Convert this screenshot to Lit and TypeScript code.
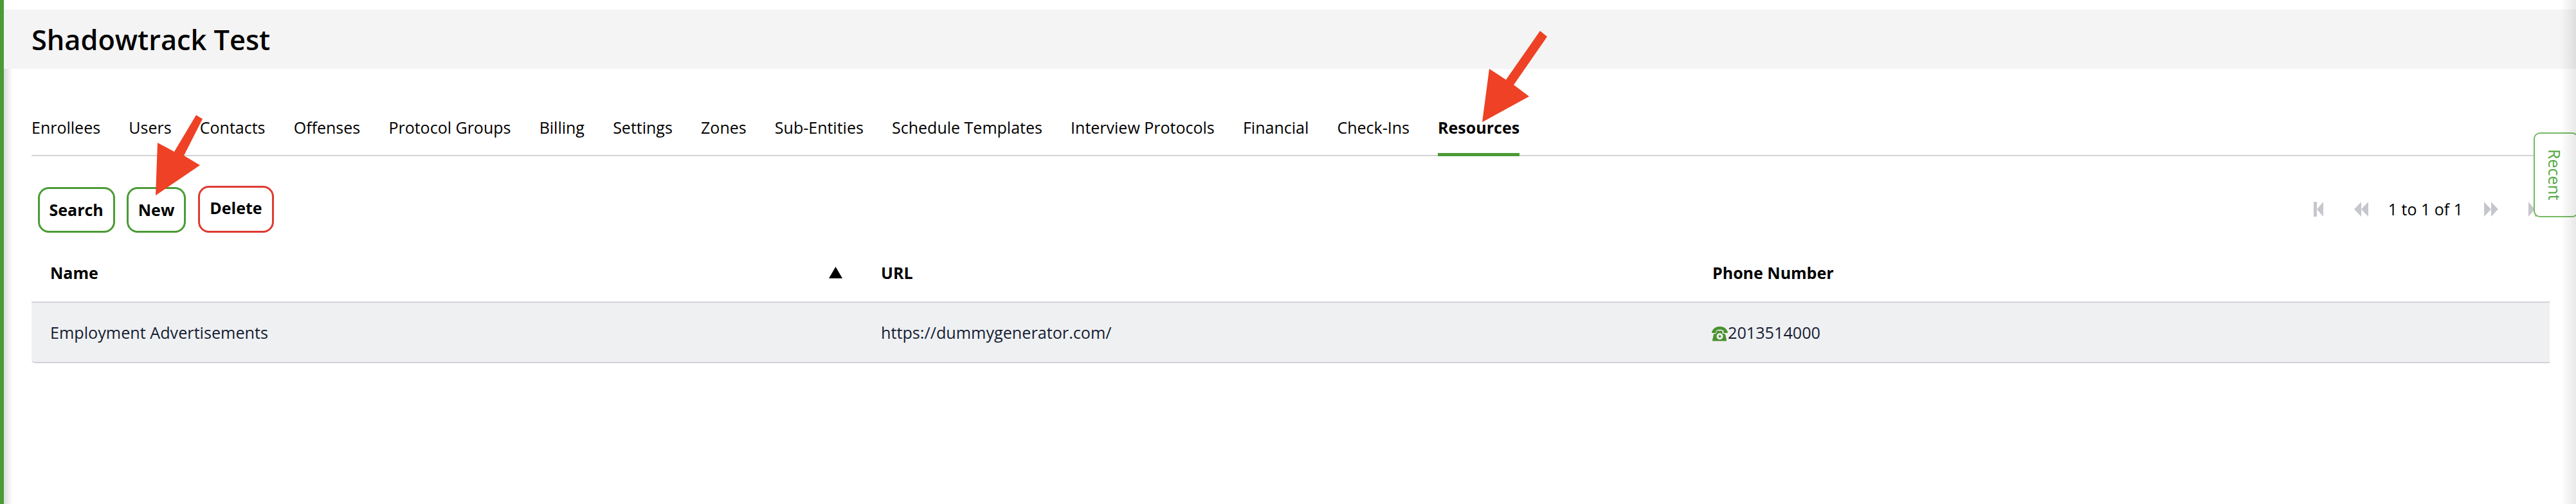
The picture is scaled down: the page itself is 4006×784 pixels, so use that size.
import { LitElement, css, html, svg } from "lit";
import { customElement } from "lit/decorators.js";

const TABS = [
  "Enrollees",
  "Users",
  "Contacts",
  "Offenses",
  "Protocol Groups",
  "Billing",
  "Settings",
  "Zones",
  "Sub-Entities",
  "Schedule Templates",
  "Interview Protocols",
  "Financial",
  "Check-Ins",
  "Resources",
];

const phoneIcon = svg`
  <path d="M0 9.5C2 3.5 7 1 12.5 1S23 3.5 25 9.5c.2 1-.3 1.6-1.2 1.6h-4.2c-.9 0-1.3-.5-1.3-1.3V7.2c-1.8-1-3.6-1.4-5.8-1.4s-4 .4-5.8 1.4v2.6c0 .8-.4 1.3-1.3 1.3H1.2C.3 11.100-.200 10.500 0 9.500Z" />
  <path fill-rule="evenodd" d="M8.500 7.500h8v2.800c0 1 .6 1.500 1.500 1.700l3 .7 2 9.300c.2 1-.4 1.500-1.200 1.500H2.200c-.8 0-1.400-.5-1.200-1.500l2-9.300 3-.7c.9-.2 1.500-.7 1.500-1.700V7.500ZM12.500 11.200a5 5 0 1 0 0 10 5 5 0 0 0 0-10Zm0 3a2 2 0 1 1 0 4 2 2 0 0 1 0-4Z" />
`;

@customElement("app-root")
export class AppRoot extends LitElement {
  static styles = css`
    :host {
      display: block;
      position: relative;
      height: 784px;
      overflow: hidden;
      background: #fff;
      color: #000;
      font-family: "Open Sans", "Noto Sans", sans-serif;
    }
    .page {
      height: 100%;
      box-sizing: border-box;
      padding-top: 15px;
      border-left: 6px solid #4b9b35;
    }
    .band {
      height: 92px;
      box-sizing: border-box;
      padding-left: 43px;
      background: #f4f4f4;
      display: flex;
      align-items: center;
      font-size: 43.300px;
      font-weight: 600;
    }
    .tabs {
      display: flex;
      gap: 44.200px;
      margin: 64px 66px 0 43px;
      height: 72px;
      box-sizing: border-box;
      border-bottom: 2px solid #d2d3d7;
      font-size: 25px;
    }
    .tab {
      height: 72px;
      box-sizing: border-box;
      line-height: 54px;
      white-space: nowrap;
    }
    .tab.active {
      font-weight: 700;
      border-bottom: 5px solid #4b9b35;
    }
    .toolbar {
      display: flex;
      align-items: center;
      justify-content: space-between;
      margin: 45px 66px 0 52.500px;
      height: 74px;
    }
    .buttons {
      display: flex;
      gap: 18px;
      align-items: flex-end;
    }
    .btn {
      box-sizing: border-box;
      height: 71px;
      padding: 0 15px;
      display: flex;
      align-items: center;
      border: 3px solid #4b9b35;
      border-radius: 17px;
      font-size: 25px;
      font-weight: 700;
      background: #fff;
    }
    .btn.danger {
      height: 73px;
      margin-left: 1px;
      padding-bottom: 4px;
      border-color: #dd3b32;
    }
    .pager {
      display: flex;
      align-items: center;
      margin-right: -7px;
      font-size: 25px;
    }
    .pager svg {
      display: block;
      height: 23px;
      fill: #c6c7cc;
    }
    .pager .first {
      width: 15px;
      margin-right: 48px;
    }
    .pager .prev {
      width: 22px;
      margin-right: 31px;
    }
    .pager .next {
      width: 22px;
      margin: 0 47px 0 33px;
    }
    .pager .last {
      width: 15px;
    }
    .table {
      margin: 17px 41px 0 43px;
    }
    .row {
      display: grid;
      grid-template-columns: 1292px 1293px 1fr;
      align-items: center;
      padding-left: 29px;
      font-size: 25px;
    }
    .head {
      height: 92px;
      box-sizing: border-box;
      font-weight: 700;
      border-bottom: 2px solid #d2d3d7;
    }
    .name-head {
      display: flex;
      justify-content: space-between;
      align-items: center;
      padding-right: 60px;
    }
    .sort {
      width: 21px;
      height: 18px;
      background: #000;
      clip-path: polygon(50% 0, 100% 100%, 0 100%);
    }
    .body {
      height: 94px;
      box-sizing: border-box;
      background: #eff0f2;
      border-bottom: 2px solid #d2d3d7;
      border-radius: 0 0 0 6px;
      color: #151d33;
      font-size: 25.200px;
    }
    .phone {
      display: flex;
      align-items: center;
    }
    .phone svg {
      width: 25px;
      height: 24px;
      margin: 4px 0 0 -1px;
      fill: #4b9130;
    }
    .recent {
      position: absolute;
      left: 3940px;
      top: 206px;
      width: 70px;
      height: 132px;
      box-sizing: border-box;
      border: 2px solid #74b964;
      border-radius: 10px;
      background: #fff;
      color: #4fa83d;
      display: flex;
      align-items: center;
      justify-content: center;
      font-size: 25px;
      z-index: 1;
    }
    .recent span {
      writing-mode: vertical-rl;
      margin-right: 5px;
    }
    .shade-left {
      position: absolute;
      left: 6px;
      top: 107px;
      bottom: 0;
      width: 14px;
      background: linear-gradient(to right, #dcdcdc, rgba(255, 255, 255, 0));
    }
    .shade-right {
      position: absolute;
      right: 0;
      top: 0;
      bottom: 0;
      width: 24px;
      background: linear-gradient(to left, rgba(0, 0, 0, 0.09), rgba(0, 0, 0, 0));
      z-index: 2;
    }
    .arrows {
      position: absolute;
      left: 0;
      top: 0;
      z-index: 3;
      fill: #ee4125;
    }
  `;

  render() {
    return html`
      <div class="page">
        <div class="band">Shadowtrack Test</div>
        <nav class="tabs">
          ${TABS.map(
            (t) =>
              html`<div class="tab ${t === "Resources" ? "active" : ""}">${t}</div>`,
          )}
        </nav>
        <div class="toolbar">
          <div class="buttons">
            <div class="btn">Search</div>
            <div class="btn">New</div>
            <div class="btn danger">Delete</div>
          </div>
          <div class="pager">
            <svg class="first" viewBox="0 0 15 23">
              <path d="M0 0h5v23H0zM5 11.500 15 0v23z" />
            </svg>
            <svg class="prev" viewBox="0 0 22 23">
              <path d="M0 11.500 11 0v23zM11 11.500 22 0v23z" />
            </svg>
            <span>1 to 1 of 1</span>
            <svg class="next" viewBox="0 0 22 23">
              <path d="M0 0l11 11.500L0 23zM11 0l11 11.500L11 23z" />
            </svg>
            <svg class="last" viewBox="0 0 15 23">
              <path d="M0 0l10 11.500L0 23zM10 0h5v23h-5z" />
            </svg>
          </div>
        </div>
        <div class="table">
          <div class="row head">
            <div class="name-head">Name<span class="sort"></span></div>
            <div>URL</div>
            <div>Phone Number</div>
          </div>
          <div class="row body">
            <div>Employment Advertisements</div>
            <div>https://dummygenerator.com/</div>
            <div class="phone">
              <svg viewBox="0 0 25 24">${phoneIcon}</svg>2013514000
            </div>
          </div>
        </div>
      </div>
      <div class="shade-left"></div>
      <div class="recent"><span>Recent</span></div>
      <div class="shade-right"></div>
      <svg class="arrows" width="4006" height="784">
        <polygon points="305,179 315,185 286,242 311,257 242,304 245,222 271,236" />
        <polygon points="2395,48 2406,57 2354,132 2378,150 2305,190 2316,107 2342,124" />
      </svg>
    `;
  }
}
